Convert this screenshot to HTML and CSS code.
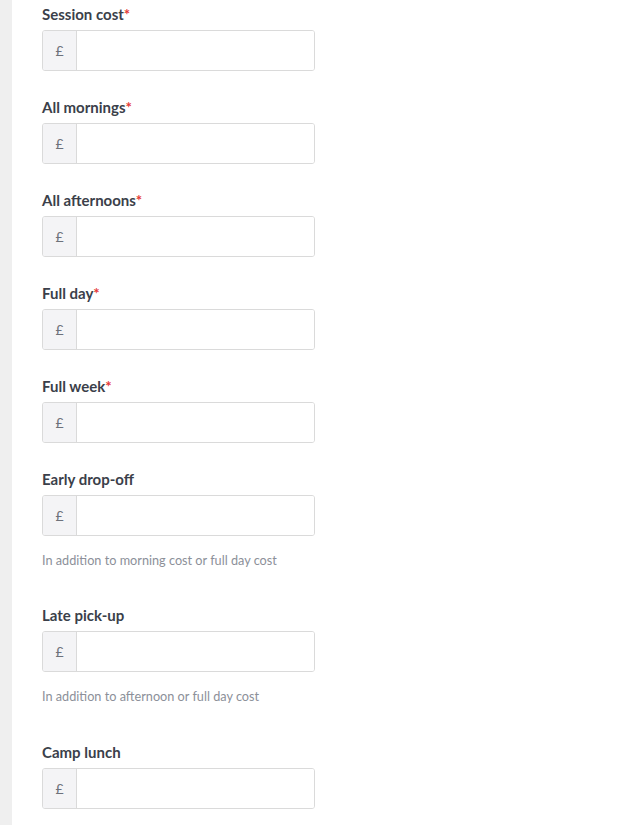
FILE: index.html
```html
<!DOCTYPE html>
<html lang="en">
<head>
<meta charset="utf-8">
<link rel="stylesheet" href="styles.css">
</head>
<body>
<div class="layout">
  <div class="strip"></div>
  <form class="form">
    <div class="field">
      <label class="label">Session cost<span class="req">*</span></label>
      <div class="input-group"><span class="prefix">£</span><input class="input" type="text"></div>
    </div>
    <div class="field">
      <label class="label">All mornings<span class="req">*</span></label>
      <div class="input-group"><span class="prefix">£</span><input class="input" type="text"></div>
    </div>
    <div class="field">
      <label class="label">All afternoons<span class="req">*</span></label>
      <div class="input-group"><span class="prefix">£</span><input class="input" type="text"></div>
    </div>
    <div class="field">
      <label class="label">Full day<span class="req">*</span></label>
      <div class="input-group"><span class="prefix">£</span><input class="input" type="text"></div>
    </div>
    <div class="field">
      <label class="label">Full week<span class="req">*</span></label>
      <div class="input-group"><span class="prefix">£</span><input class="input" type="text"></div>
    </div>
    <div class="field">
      <label class="label">Early drop-off</label>
      <div class="input-group"><span class="prefix">£</span><input class="input" type="text"></div>
      <p class="help">In addition to morning cost or full day cost</p>
    </div>
    <div class="field">
      <label class="label">Late pick-up</label>
      <div class="input-group"><span class="prefix">£</span><input class="input" type="text"></div>
      <p class="help">In addition to afternoon or full day cost</p>
    </div>
    <div class="field">
      <label class="label">Camp lunch</label>
      <div class="input-group"><span class="prefix">£</span><input class="input" type="text"></div>
    </div>
  </form>
</div>
</body>
</html>
```

FILE: styles.css
```css
html, body {
  margin: 0;
  padding: 0;
  background: #ffffff;
  font-family: Lato, "Open Sans", sans-serif;
}
.layout {
  display: flex;
  min-height: 825px;
}
.strip {
  width: 12px;
  flex: none;
  background: #efefef;
}
.form {
  padding: 4px 0 0 30px;
  display: flex;
  flex-direction: column;
}
.field {
  display: flex;
  flex-direction: column;
  margin-bottom: 26px;
}
.label {
  font-size: 15px;
  line-height: 20px;
  font-weight: 700;
  color: #3b3f4a;
  margin-bottom: 6px;
}
.req {
  color: #e53935;
}
.input-group {
  display: flex;
  width: 273px;
  height: 41px;
  box-sizing: border-box;
  border: 1px solid #dadada;
  border-radius: 3px;
  overflow: hidden;
}
.prefix {
  width: 33px;
  flex: none;
  display: flex;
  align-items: center;
  justify-content: center;
  background: #f4f4f6;
  border-right: 1px solid #dadada;
  color: #6d717a;
  font-size: 14px;
}
.input {
  flex: 1;
  min-width: 0;
  border: 0;
  outline: none;
  padding: 0 10px;
  font-family: inherit;
  font-size: 14px;
  background: #ffffff;
}
.help {
  margin: 15px 0 10.3px;
  font-size: 12.7px;
  line-height: 18px;
  color: #8c9099;
}
```
